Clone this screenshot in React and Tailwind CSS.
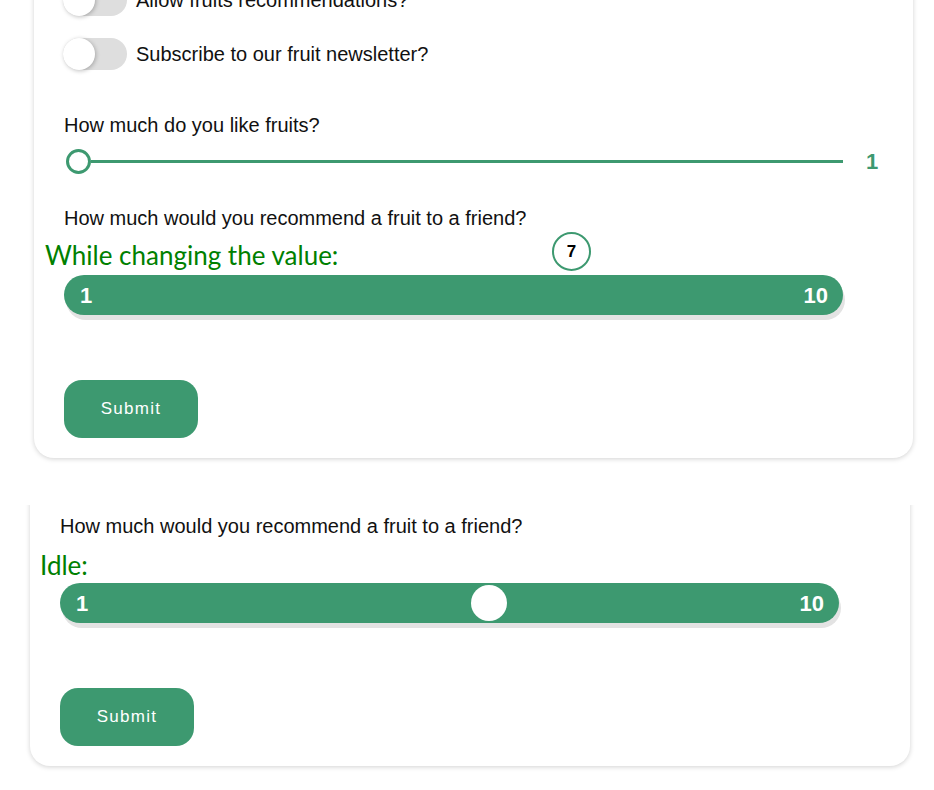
import React from 'react';

const green = 'bg-[#3d9970]';

const Toggle = ({ label }) => (
  <div className="flex items-center h-[32px]">
    <div className="relative w-[64px] h-[32px] rounded-full bg-[#dedede] -ml-[1px]">
      <div className="absolute left-0 top-0 w-[32px] h-[32px] rounded-full bg-white shadow-[1px_1px_4px_rgba(0,0,0,0.25)]" />
    </div>
    <span className="ml-[9px] text-[20px] text-[#111]">{label}</span>
  </div>
);

const ValueBar = ({ children }) => (
  <div className={`relative w-[779px] h-[40px] rounded-full ${green} shadow-[2px_5px_0_#e3e3e3] flex items-center justify-between pl-[16px] pr-[15px] text-white font-bold text-[22px]`}>
    <span>1</span>
    <span>10</span>
    {children}
  </div>
);

const SubmitButton = () => (
  <button className={`w-[134px] h-[58px] rounded-[18px] ${green} text-white text-[17px] tracking-[1.3px]`}>
    Submit
  </button>
);

export default function App() {
  return (
    <div className="min-h-screen bg-white overflow-hidden font-['Liberation_Sans',Arial,sans-serif]">
      {/* Card: while changing the value */}
      <div className="ml-[34px] w-[879px] -mt-[50px] pt-[34px] pb-[20px] pl-[30px] rounded-[20px] bg-white shadow-[0_1px_5px_rgba(0,0,0,0.18)]">
        <div className="flex flex-col gap-[22px]">
          <Toggle label="Allow fruits recommendations?" />
          <Toggle label="Subscribe to our fruit newsletter?" />
        </div>

        <p className="mt-[43px] text-[20px] leading-[24px] text-[#111]">How much do you like fruits?</p>
        <div className="mt-[11px] flex items-center h-[26px]">
          <div className="flex items-center w-[779px]">
            <div className="ml-[2px] w-[25px] h-[25px] rounded-full border-[3px] border-[#3d9970] bg-white shrink-0" />
            <div className="flex-1 h-[3px] bg-[#3d9970]" />
          </div>
          <span className="ml-[23px] text-[22px] font-bold text-[#3d9970]">1</span>
        </div>

        <p className="mt-[32px] text-[20px] leading-[24px] text-[#111]">How much would you recommend a fruit to a friend?</p>
        <div className="relative mt-[8px] h-[34px] flex items-center">
          <span className="-ml-[19px] font-['Lato',sans-serif] text-[26px] text-[#008000]">While changing the value:</span>
          <div className="absolute left-[488px] -top-[6px] w-[39px] h-[39px] rounded-full border-2 border-[#3d9970] bg-white flex items-center justify-center text-[17px] font-bold text-black">
            7
          </div>
        </div>
        <div className="mt-[3px]">
          <ValueBar />
        </div>

        <div className="mt-[65px]">
          <SubmitButton />
        </div>
      </div>

      {/* Card: idle */}
      <div className="mt-[47px] ml-[20px] w-[900px] overflow-hidden px-[10px] pb-[14px]">
        <div className="-mt-[20px] pt-[29px] pb-[20px] pl-[30px] rounded-[20px] bg-white shadow-[0_1px_5px_rgba(0,0,0,0.18)]">
          <p className="text-[20px] leading-[24px] text-[#111]">How much would you recommend a fruit to a friend?</p>
          <div className="mt-[10px] h-[34px] flex items-center">
            <span className="-ml-[20px] font-['Lato',sans-serif] text-[26px] text-[#008000]">Idle:</span>
          </div>
          <div className="mt-[1px]">
            <ValueBar>
              <div className="absolute left-[411px] top-[2px] w-[36px] h-[36px] rounded-full bg-white" />
            </ValueBar>
          </div>
          <div className="mt-[65px]">
            <SubmitButton />
          </div>
        </div>
      </div>
    </div>
  );
}
